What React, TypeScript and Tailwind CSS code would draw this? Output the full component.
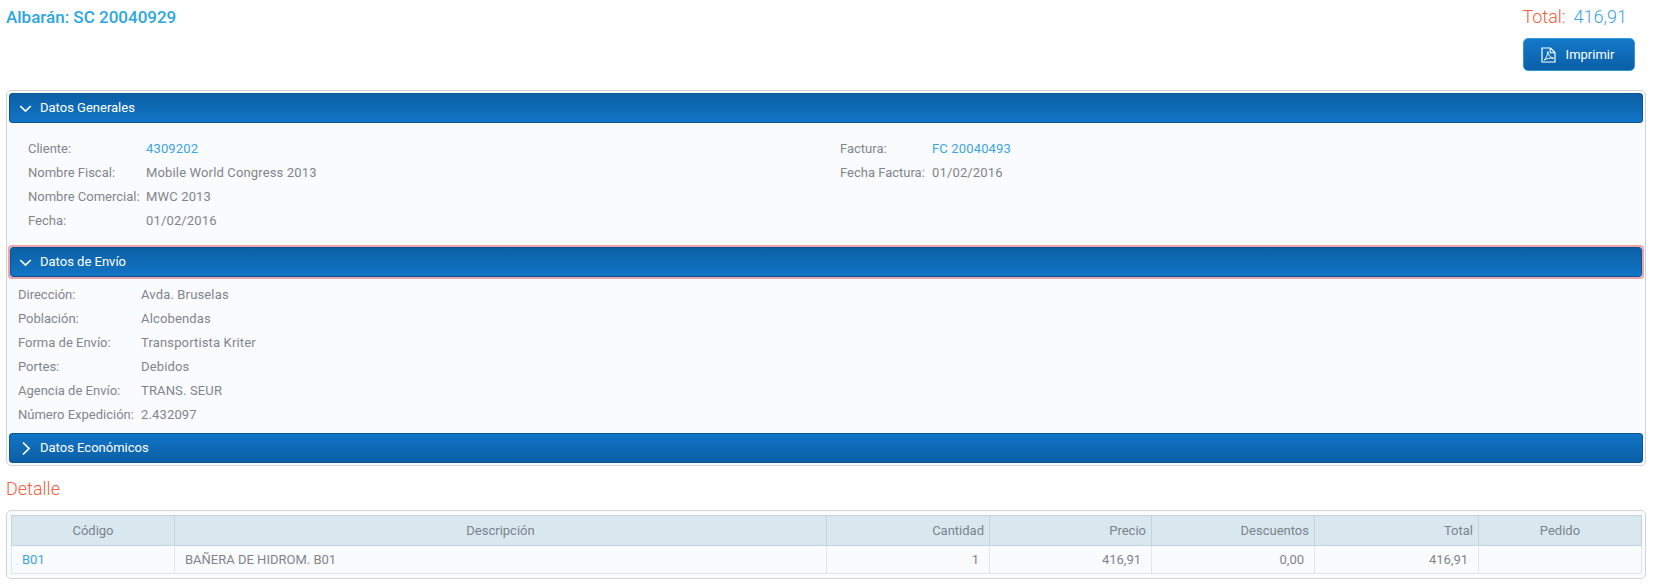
import React from "react";

const font = { fontFamily: '"Roboto", "Liberation Sans", sans-serif' };

function Chevron({ open }: { open: boolean }) {
  return (
    <svg width="15" height="15" viewBox="0 0 15 15" fill="none" stroke="currentColor" strokeWidth="1.7" className="shrink-0">
      <path d={open ? "M2.2 5 L7.5 10 L12.8 5" : "M5 1.5 L11 7.5 L5 13.5"} />
    </svg>
  );
}

function PdfIcon() {
  return (
    <svg width="15" height="16" viewBox="0 0 15 16" fill="none" stroke="currentColor" className="shrink-0">
      <path d="M1 1 H9.5 L14 5.5 V15 H1 Z" strokeWidth="1.2" />
      <path d="M9.2 1 V5.8 H14" strokeWidth="1.1" />
      <path d="M3 13 C5 11.5 6.5 8.5 6.8 4.5 C7 7.5 9 10.5 12.5 11.2 C9.5 10.8 6 11.4 3 13 Z" strokeWidth="1" />
    </svg>
  );
}

function PanelHeader({ title, open, flip, focus }: { title: string; open: boolean; flip?: boolean; focus?: boolean }) {
  return (
    <div className={focus ? "-mx-px rounded-[4px] border-2 border-[#eea4aa]" : ""}>
      <div
        className={`flex h-[30px] items-center rounded-[3px] border border-[#0b568f] text-[13px] text-white ${focus ? "pl-[7px]" : "pl-[8px]"} ${
          flip ? "bg-gradient-to-b from-[#1275c6] to-[#0a5fa6]" : "bg-gradient-to-b from-[#0c60a6] to-[#1275c6]"
        }`}
      >
        <Chevron open={open} />
        <span className="ml-[7px]">{title}</span>
      </div>
    </div>
  );
}

function Row({ label, value, link, w }: { label: string; value: string; link?: boolean; w: string }) {
  return (
    <div className="flex h-[24px] items-center">
      <span className={`${w} shrink-0 text-[#80868d]`}>{label}</span>
      <span className={`tracking-[0.15px] ${link ? "text-[#3ba5e0]" : "text-[#80858b]"}`}>{value}</span>
    </div>
  );
}

const cols = [
  { t: "Código", w: "w-[163px]", a: "text-center" },
  { t: "Descripción", w: "w-[652px]", a: "text-center" },
  { t: "Cantidad", w: "w-[163px]", a: "text-right" },
  { t: "Precio", w: "w-[162px]", a: "text-right" },
  { t: "Descuentos", w: "w-[163px]", a: "text-right" },
  { t: "Total", w: "w-[164px]", a: "text-right" },
  { t: "Pedido", w: "w-[163px]", a: "text-center" },
];

export default function App() {
  return (
    <div className="min-h-[586px] bg-white pl-[6px] pr-[7px] text-[13px]" style={font}>
      <div className="flex h-[90px] items-start justify-between">
        <h1 className="mt-[6px] text-[17px] font-medium leading-[22px] text-[#2ba6e0]">Albarán: SC 20040929</h1>
        <div className="flex flex-col items-end pr-[11px]">
          <div className="mr-[8px] mt-[6px] h-[22px] text-[18px] font-light leading-[22px]">
            <span className="text-[#f0603f]">Total:</span>
            <span className="ml-[8px] text-[#3fa3e2]">416,91</span>
          </div>
          <button className="mt-[10px] flex h-[33px] w-[112px] items-center justify-center gap-[10px] rounded-[5px] border border-[#2f97dc] bg-gradient-to-b from-[#1379ca] to-[#0a5fa6] pr-[3px] text-[13px] text-white">
            <PdfIcon />
            Imprimir
          </button>
        </div>
      </div>

      <div className="rounded-[5px] border border-[#cfd3d8] bg-[#fafbfd] p-[2px]">
        <PanelHeader title="Datos Generales" open />
        <div className="flex h-[122px] pl-[19px] pt-[14px]">
          <div className="w-[812px]">
            <Row w="w-[118px]" label="Cliente:" value="4309202" link />
            <Row w="w-[118px]" label="Nombre Fiscal:" value="Mobile World Congress 2013" />
            <Row w="w-[118px]" label="Nombre Comercial:" value="MWC 2013" />
            <Row w="w-[118px]" label="Fecha:" value="01/02/2016" />
          </div>
          <div>
            <Row w="w-[92px]" label="Factura:" value="FC 20040493" link />
            <Row w="w-[92px]" label="Fecha Factura:" value="01/02/2016" />
          </div>
        </div>
        <PanelHeader title="Datos de Envío" open focus />
        <div className="h-[154px] pl-[9px] pt-[4px]">
          <Row w="w-[123px]" label="Dirección:" value="Avda. Bruselas" />
          <Row w="w-[123px]" label="Población:" value="Alcobendas" />
          <Row w="w-[123px]" label="Forma de Envío:" value="Transportista Kriter" />
          <Row w="w-[123px]" label="Portes:" value="Debidos" />
          <Row w="w-[123px]" label="Agencia de Envío:" value="TRANS. SEUR" />
          <Row w="w-[123px]" label="Número Expedición:" value="2.432097" />
        </div>
        <PanelHeader title="Datos Económicos" open={false} flip />
      </div>

      <h2 className="mt-[11px] text-[18px] font-light leading-[24px] text-[#f0603f]">Detalle</h2>

      <div className="mt-[9px] rounded-[5px] border border-[#cfd3d8] bg-[#fafbfd] p-[4px]">
        <table className="w-full table-fixed border-collapse">
          <colgroup>
            {cols.map((c) => (
              <col key={c.t} className={c.w} />
            ))}
          </colgroup>
          <thead>
            <tr className="h-[30px] bg-[#d9e7ef]">
              {cols.map((c) => (
                <th key={c.t} className={`border border-[#c3d4df] px-[5px] text-[13px] font-normal text-[#79848d] ${c.a}`}>
                  {c.t}
                </th>
              ))}
            </tr>
          </thead>
          <tbody>
            <tr className="h-[28px] text-[#80858b]">
              <td className="border border-[#e0e6ec] px-[10px] text-[#3ba5e0]">B01</td>
              <td className="border border-[#e0e6ec] px-[10px]">BAÑERA DE HIDROM. B01</td>
              <td className="border border-[#e0e6ec] px-[10px] text-right">1</td>
              <td className="border border-[#e0e6ec] px-[10px] text-right">416,91</td>
              <td className="border border-[#e0e6ec] px-[10px] text-right">0,00</td>
              <td className="border border-[#e0e6ec] px-[10px] text-right">416,91</td>
              <td className="border border-[#e0e6ec] px-[10px]"></td>
            </tr>
          </tbody>
        </table>
      </div>
    </div>
  );
}
